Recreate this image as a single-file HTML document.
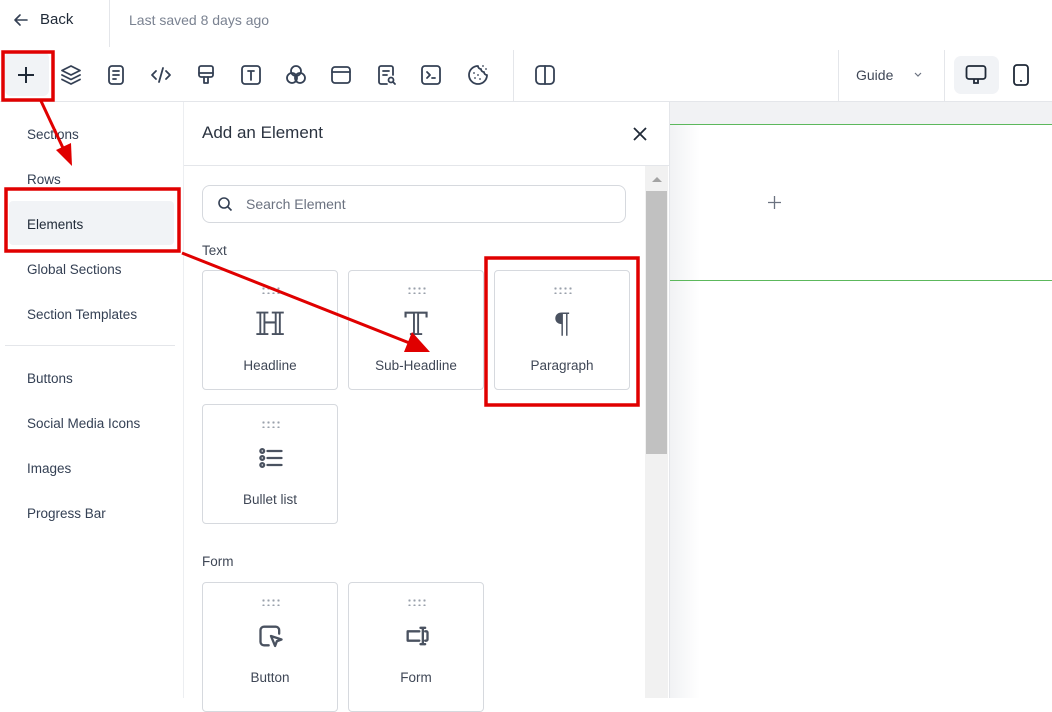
<!DOCTYPE html>
<html><head><meta charset="utf-8"><style>
*{box-sizing:border-box;margin:0;padding:0}
body{width:1052px;height:698px;overflow:hidden;background:#fff;font-family:"Liberation Sans",sans-serif;color:#344054;position:relative}
.abs{position:absolute}
.ic{position:absolute;top:63px;width:24px;height:24px}
.ic svg{width:24px;height:24px;fill:none;stroke:#344054;stroke-width:1.8;stroke-linecap:round;stroke-linejoin:round}
.nav{position:absolute;left:27px;font-size:13.5px;color:#344054}
.card{position:absolute;width:136px;height:120px;border:1px solid #d6d9de;border-radius:4px;background:#fff}
.card .dots{position:absolute;left:58px;top:15px;width:20px;height:8px;background-image:radial-gradient(circle,#9aa1ab 1px,transparent 1.3px);background-size:5px 5px}
.card .lbl{position:absolute;left:0;right:0;top:87px;text-align:center;font-size:13.5px;color:#3f4756}
.card svg{position:absolute;left:54px;top:39px;fill:none;stroke:#4a5260;stroke-width:2;stroke-linecap:round;stroke-linejoin:round}
.card .g{position:absolute;left:0;right:0;top:33px;text-align:center;font-family:"DejaVu Serif",serif;font-size:32px;line-height:40px;color:#4a5260}
</style></head><body>
<!-- top bar -->
<div class="abs" style="left:109px;top:0;width:1px;height:47px;background:#e4e6ea"></div>
<svg class="abs" style="left:13px;top:12px" width="16" height="16" viewBox="0 0 16 16"><path d="M14 8H2M7 3L2 8l5 5" fill="none" stroke="#344054" stroke-width="1.6" stroke-linecap="round" stroke-linejoin="round"/></svg>
<div class="abs" style="left:40px;top:11px;font-size:15px;color:#1f2937">Back</div>
<div class="abs" style="left:129px;top:12px;font-size:14px;color:#7a8291">Last saved 8 days ago</div>
<!-- toolbar -->
<div class="abs" style="left:0;top:101px;width:1052px;height:1px;background:#e4e6ea"></div>
<div class="abs" style="left:5px;top:52px;width:44px;height:44px;background:#f1f3f6;border-radius:6px"></div>
<svg class="abs" style="left:16px;top:65px" width="20" height="20" viewBox="0 0 20 20"><path d="M10 2v16M2 10h16" stroke="#1f2937" stroke-width="2"/></svg>
<div class="ic" style="left:59px"><svg viewBox="0 0 24 24"><path d="M12 3l9 4.5-9 4.5-9-4.5z"/><path d="M3 12l9 4.5 9-4.5"/><path d="M3 16.5L12 21l9-4.5"/></svg></div>
<div class="ic" style="left:104px"><svg viewBox="0 0 24 24"><rect x="5" y="3" width="14" height="18" rx="3"/><path d="M9 8h6M9 12h6M9 16h3"/></svg></div>
<div class="ic" style="left:149px"><svg viewBox="0 0 24 24"><path d="M7 8l-4 4 4 4M17 8l4 4-4 4M14 5l-4 14"/></svg></div>
<div class="ic" style="left:194px"><svg viewBox="0 0 24 24"><rect x="5" y="3" width="14" height="11" rx="2"/><path d="M5 10h14M10 14v6h4v-6"/></svg></div>
<div class="ic" style="left:239px"><svg viewBox="0 0 24 24"><rect x="3" y="3" width="18" height="18" rx="3"/><path d="M9 8h6M12 8v9"/></svg></div>
<div class="ic" style="left:284px"><svg viewBox="0 0 24 24"><circle cx="12" cy="8" r="5"/><circle cx="8" cy="15" r="5"/><circle cx="16" cy="15" r="5"/></svg></div>
<div class="ic" style="left:329px"><svg viewBox="0 0 24 24"><rect x="3" y="4" width="18" height="16" rx="3"/><path d="M3 9h18"/></svg></div>
<div class="ic" style="left:374px"><svg viewBox="0 0 24 24"><path d="M13 21H7a2 2 0 0 1-2-2V5a2 2 0 0 1 2-2h10a2 2 0 0 1 2 2v7"/><path d="M9 8h6M9 12h4"/><circle cx="17" cy="17" r="2.5"/><path d="M19 19l2 2"/></svg></div>
<div class="ic" style="left:419px"><svg viewBox="0 0 24 24"><rect x="3" y="3" width="18" height="18" rx="3"/><path d="M8 9l3 3-3 3M13 15h3"/></svg></div>
<div class="ic" style="left:466px"><svg viewBox="0 0 24 24"><path d="M12 3a9 9 0 1 0 9 9 3 3 0 0 1-3-3 3 3 0 0 1-3-3 3 3 0 0 1-3-3z"/><path d="M8 10h.01M9 15h.01M14 16h.01M12 12h.01M17 3h.01M20 6h.01"/></svg></div>
<div class="abs" style="left:513px;top:50px;width:1px;height:51px;background:#e4e6ea"></div>
<div class="ic" style="left:533px"><svg viewBox="0 0 24 24"><rect x="3" y="3" width="18" height="18" rx="4"/><path d="M12 3v18"/></svg></div>
<div class="abs" style="left:838px;top:50px;width:1px;height:51px;background:#e4e6ea"></div>
<div class="abs" style="left:856px;top:67px;font-size:14px;color:#3f4756">Guide</div>
<svg class="abs" style="left:913px;top:71px" width="10" height="8" viewBox="0 0 10 8"><path d="M2 2l3 3 3-3" fill="none" stroke="#6b7280" stroke-width="1.2"/></svg>
<div class="abs" style="left:944px;top:50px;width:1px;height:51px;background:#e4e6ea"></div>
<div class="abs" style="left:954px;top:56px;width:45px;height:38px;background:#f1f3f6;border-radius:7px"></div>
<svg class="abs" style="left:965px;top:64px" width="22" height="22" viewBox="0 0 22 22"><rect x="1.5" y="2" width="19" height="13" rx="2.5" fill="none" stroke="#1f2937" stroke-width="1.8"/><path d="M9 15v4h4v-4" fill="none" stroke="#1f2937" stroke-width="1.8"/></svg>
<svg class="abs" style="left:1012px;top:63px" width="18" height="24" viewBox="0 0 18 24"><rect x="2" y="2" width="14" height="20" rx="3" fill="none" stroke="#1f2937" stroke-width="1.8"/><circle cx="9" cy="18" r="1" fill="#1f2937"/></svg>
<!-- left nav -->
<div class="abs" style="left:183px;top:102px;width:1px;height:596px;background:#eceef1"></div>
<div class="abs" style="left:9px;top:201px;width:165px;height:44px;background:#f1f3f6;border-radius:4px"></div>
<div class="nav" style="top:127px">Sections</div>
<div class="nav" style="top:172px">Rows</div>
<div class="nav" style="top:217px;color:#1f2937">Elements</div>
<div class="nav" style="top:262px">Global Sections</div>
<div class="nav" style="top:307px">Section Templates</div>
<div class="abs" style="left:5px;top:345px;width:170px;height:1px;background:#e4e6ea"></div>
<div class="nav" style="top:371px">Buttons</div>
<div class="nav" style="top:416px">Social Media Icons</div>
<div class="nav" style="top:461px">Images</div>
<div class="nav" style="top:506px">Progress Bar</div>
<!-- panel -->
<div class="abs" style="left:184px;top:102px;width:485px;height:596px;background:#fff"></div>
<div class="abs" style="left:184px;top:165px;width:485px;height:1px;background:#e4e6ea"></div>
<div class="abs" style="left:202px;top:123px;font-size:17px;color:#2b3340">Add an Element</div>
<svg class="abs" style="left:632px;top:126px" width="16" height="16" viewBox="0 0 16 16"><path d="M2 2l12 12M14 2L2 14" stroke="#1f2937" stroke-width="1.8"/></svg>
<div class="abs" style="left:645px;top:166px;width:23px;height:532px;background:#f1f1f1"></div>
<div class="abs" style="left:646px;top:191px;width:21px;height:263px;background:#c1c1c1"></div>
<svg class="abs" style="left:651px;top:175px" width="12" height="8" viewBox="0 0 12 8"><path d="M1 7l5-5 5 5z" fill="#a3a3a3"/></svg>
<div class="abs" style="left:669px;top:102px;width:1px;height:596px;background:#e4e6ea"></div>
<div class="abs" style="left:202px;top:185px;width:424px;height:38px;border:1px solid #d6d9de;border-radius:8px"></div>
<svg class="abs" style="left:217px;top:196px" width="16" height="16" viewBox="0 0 16 16"><circle cx="7" cy="7" r="5" fill="none" stroke="#344054" stroke-width="1.6"/><path d="M11 11l3.5 3.5" stroke="#344054" stroke-width="1.6"/></svg>
<div class="abs" style="left:246px;top:196px;font-size:14px;color:#6b7280">Search Element</div>
<div class="abs" style="left:202px;top:243px;font-size:13.5px;color:#3f4756">Text</div>
<div class="card" style="left:202px;top:270px"><div class="dots"></div><div class="g">ℍ</div><div class="lbl">Headline</div></div>
<div class="card" style="left:348px;top:270px"><div class="dots"></div><div class="g">𝕋</div><div class="lbl">Sub-Headline</div></div>
<div class="card" style="left:494px;top:270px"><div class="dots"></div><div class="g" style="font-size:28px">¶</div><div class="lbl">Paragraph</div></div>
<div class="card" style="left:202px;top:404px"><div class="dots"></div><svg width="28" height="28" viewBox="0 0 24 24"><circle cx="4.5" cy="6" r="1.6"/><circle cx="4.5" cy="12" r="1.6"/><circle cx="4.5" cy="18" r="1.6"/><path d="M9 6h12M9 12h12M9 18h12"/></svg><div class="lbl">Bullet list</div></div>
<div class="abs" style="left:202px;top:554px;font-size:13.5px;color:#3f4756">Form</div>
<div class="card" style="left:202px;top:582px;height:130px"><div class="dots"></div><svg width="28" height="28" viewBox="0 0 24 24"><path d="M10 20H6a3 3 0 0 1-3-3V7a3 3 0 0 1 3-3h10a3 3 0 0 1 3 3v3"/><path d="M12 12l9 3-4 1.5-1.5 4z"/></svg><div class="lbl">Button</div></div>
<div class="card" style="left:348px;top:582px;height:130px"><div class="dots"></div><svg width="28" height="28" viewBox="0 0 24 24"><path d="M14 8H4v8h10M15 5h4M17 5v14M15 19h4M19 8h1a1 1 0 0 1 1 1v6a1 1 0 0 1-1 1h-1"/></svg><div class="lbl">Form</div></div>
<!-- canvas -->
<div class="abs" style="left:670px;top:102px;width:382px;height:22px;background:#f1f2f4"></div>
<div class="abs" style="left:670px;top:125px;width:30px;height:573px;background:linear-gradient(90deg,#f1f2f4,#fff)"></div>
<div class="abs" style="left:670px;top:124px;width:382px;height:1px;background:#5cb85c"></div>
<div class="abs" style="left:670px;top:280px;width:382px;height:1px;background:#5cb85c"></div>
<svg class="abs" style="left:768px;top:196px" width="13" height="13" viewBox="0 0 13 13"><path d="M6.5 0v13M0 6.5h13" stroke="#6b7280" stroke-width="1.3"/></svg>
<!-- annotations -->
<svg class="abs" style="left:0;top:0" width="1052" height="698">
<g fill="none" stroke="#e00000" stroke-width="3.5">
<rect x="3" y="52" width="50" height="48"/>
<rect x="6" y="189" width="173" height="62"/>
<rect x="486" y="258" width="152" height="147"/>
</g>
<path d="M41 101L63 148" stroke="#e00000" stroke-width="3"/>
<path d="M56 150L72 166L71 143z" fill="#e00000"/>
<path d="M182 253L412 344" stroke="#e00000" stroke-width="3"/>
<path d="M404 352L430 352L412 332z" fill="#e00000"/>
</svg>
</body></html>
